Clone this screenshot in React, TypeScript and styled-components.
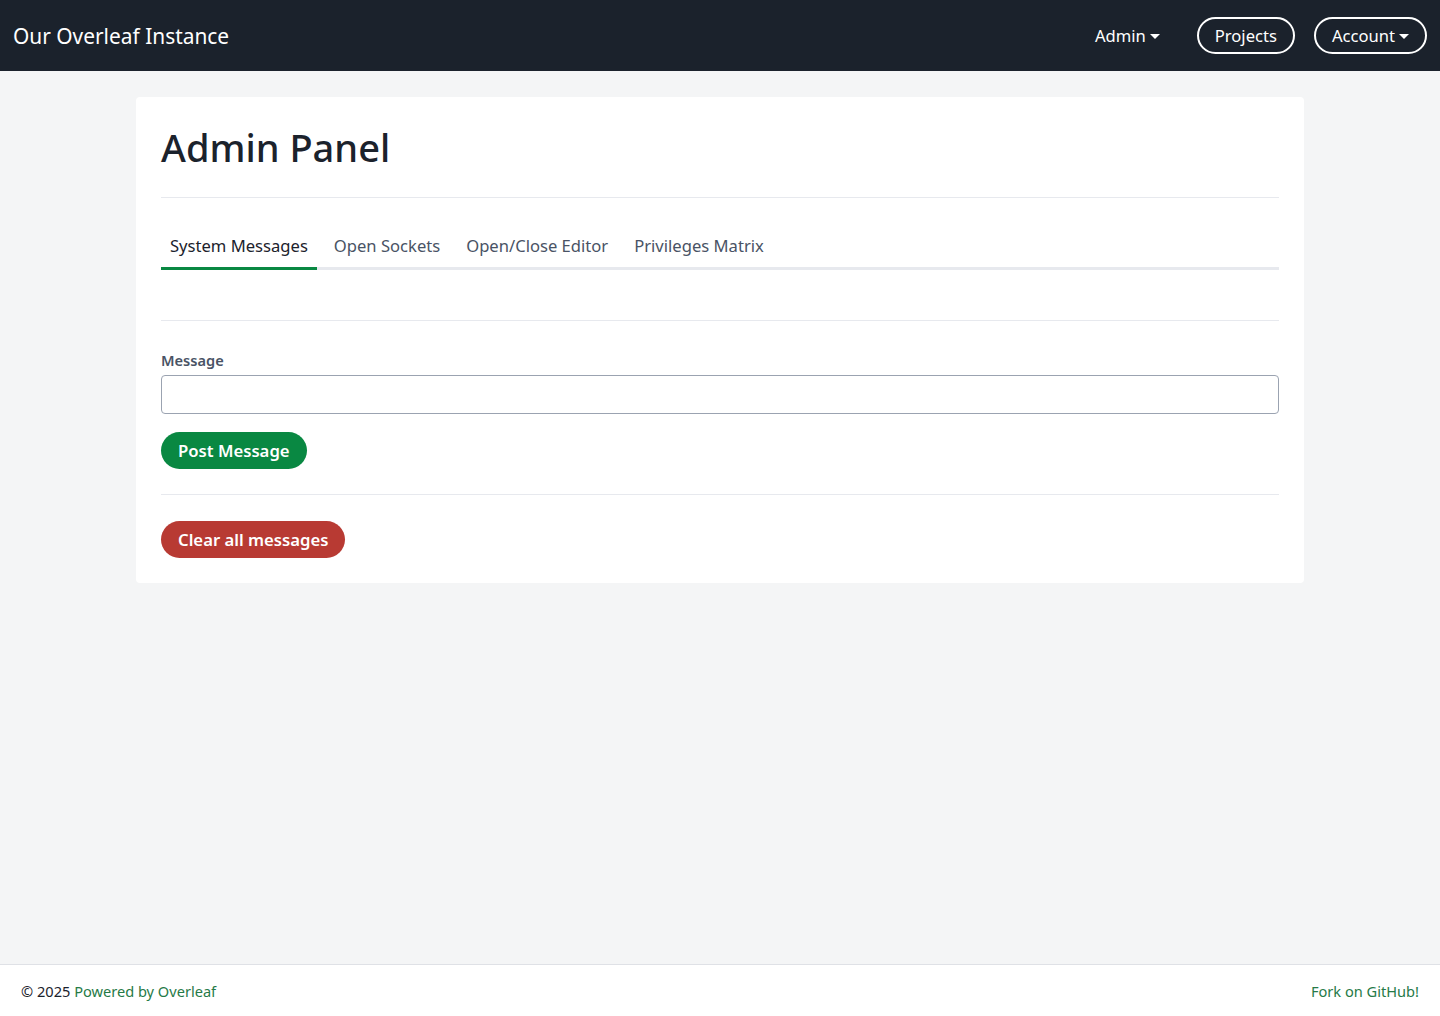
import styled, { createGlobalStyle } from "styled-components";

const GlobalStyle = createGlobalStyle`
  html, body {
    margin: 0;
    padding: 0;
    background: #f4f5f6;
    font-family: "Noto Sans", "Open Sans", sans-serif;
    color: #1b222c;
  }
  * {
    box-sizing: border-box;
  }
`

const Page = styled.div`
  min-height: 100vh;
  display: flex;
  flex-direction: column;
`

const Navbar = styled.nav`
  height: 71px;
  background: #1b222c;
  display: flex;
  align-items: center;
  justify-content: space-between;
  padding: 0 13px 0 13px;
`

const Brand = styled.a`
  color: #ffffff;
  font-size: 20.9px;
  text-decoration: none;
`

const NavRight = styled.div`
  display: flex;
  align-items: center;
  gap: 19px;
`

const NavLink = styled.a<{ $outlined?: boolean }>`
  display: inline-flex;
  align-items: center;
  gap: 4px;
  height: 37px;
  padding: 0 16px;
  color: #ffffff;
  font-size: 16.6px;
  border-radius: 19px;
  border: 2px solid ${(p) => (p.$outlined ? "#ffffff" : "transparent")};
  text-decoration: none;
`

const Caret = styled.span`
  width: 0;
  height: 0;
  border-left: 5px solid transparent;
  border-right: 5px solid transparent;
  border-top: 5px solid #ffffff;
  margin-top: 1px;
`

const Main = styled.main`
  flex: 1;
  padding: 26px 136px 40px;
`

const Card = styled.section`
  background: #ffffff;
  border-radius: 4px;
  padding: 25px;
`

const Title = styled.h1`
  margin: 0;
  font-size: 38px;
  font-weight: 500;
  line-height: 50px;
  padding-bottom: 25px;
  border-bottom: 1px solid #e7e9ee;
`

const TabList = styled.div`
  margin-top: 27px;
  display: flex;
  gap: 8px;
  border-bottom: 3px solid #e7e9ee;
`

const Tab = styled.button<{ $active?: boolean }>`
  background: none;
  border: none;
  font-family: inherit;
  font-size: 16.6px;
  padding: 9px 9px 10px;
  margin-bottom: -3px;
  color: ${(p) => (p.$active ? "#1b222c" : "#495365")};
  border-bottom: 3px solid ${(p) => (p.$active ? "#098842" : "transparent")};
  cursor: pointer;
`

const Section = styled.div`
  padding-top: 50px;
`

const Divider = styled.hr`
  border: none;
  border-top: 1px solid #e7e9ee;
  margin: 0;
`

const Field = styled.div`
  margin-top: 29px;
`

const Label = styled.label`
  display: block;
  font-size: 14.6px;
  font-weight: 600;
  color: #495365;
  margin-bottom: 5px;
  line-height: 20px;
`

const Input = styled.input`
  display: block;
  width: 100%;
  height: 39px;
  border: 1px solid #9ba3b1;
  border-radius: 4px;
  font-family: inherit;
  font-size: 16px;
  padding: 0 12px;
`

const Button = styled.button<{ $variant: "primary" | "danger" }>`
  height: 37px;
  padding: 0 17px;
  border: none;
  border-radius: 19px;
  font-family: inherit;
  font-size: 16.7px;
  font-weight: 600;
  color: #ffffff;
  background: ${(p) => (p.$variant === "primary" ? "#098842" : "#b83a33")};
  cursor: pointer;
`

const FormActions = styled.div`
  margin-top: 18px;
  padding-bottom: 25px;
  border-bottom: 1px solid #e7e9ee;
`

const ClearRow = styled.div`
  margin-top: 26px;
`

const Footer = styled.footer`
  height: 52px;
  background: #ffffff;
  border-top: 1px solid #dfe1e6;
  display: flex;
  align-items: center;
  justify-content: space-between;
  padding: 0 21px;
  font-size: 14.6px;
  color: #1b222c;
`

const FooterLink = styled.a`
  color: #267a47;
  text-decoration: none;
`

const tabs = ["System Messages", "Open Sockets", "Open/Close Editor", "Privileges Matrix"];

export default function App() {
  return (
    <>
      <GlobalStyle />
      <Page>
        <Navbar>
          <Brand href="#">Our Overleaf Instance</Brand>
          <NavRight>
            <NavLink href="#">
              Admin <Caret />
            </NavLink>
            <NavLink href="#" $outlined>
              Projects
            </NavLink>
            <NavLink href="#" $outlined>
              Account <Caret />
            </NavLink>
          </NavRight>
        </Navbar>
        <Main>
          <Card>
            <Title>Admin Panel</Title>
            <TabList>
              {tabs.map((t, i) => (
                <Tab key={t} $active={i === 0}>
                  {t}
                </Tab>
              ))}
            </TabList>
            <Section>
              <Divider />
              <Field>
                <Label htmlFor="msg">Message</Label>
                <Input id="msg" type="text" />
              </Field>
              <FormActions>
                <Button $variant="primary">Post Message</Button>
              </FormActions>
              <ClearRow>
                <Button $variant="danger">Clear all messages</Button>
              </ClearRow>
            </Section>
          </Card>
        </Main>
        <Footer>
          <span>
            © 2025 <FooterLink href="#">Powered by Overleaf</FooterLink>
          </span>
          <FooterLink href="#">Fork on GitHub!</FooterLink>
        </Footer>
      </Page>
    </>
  );
}
